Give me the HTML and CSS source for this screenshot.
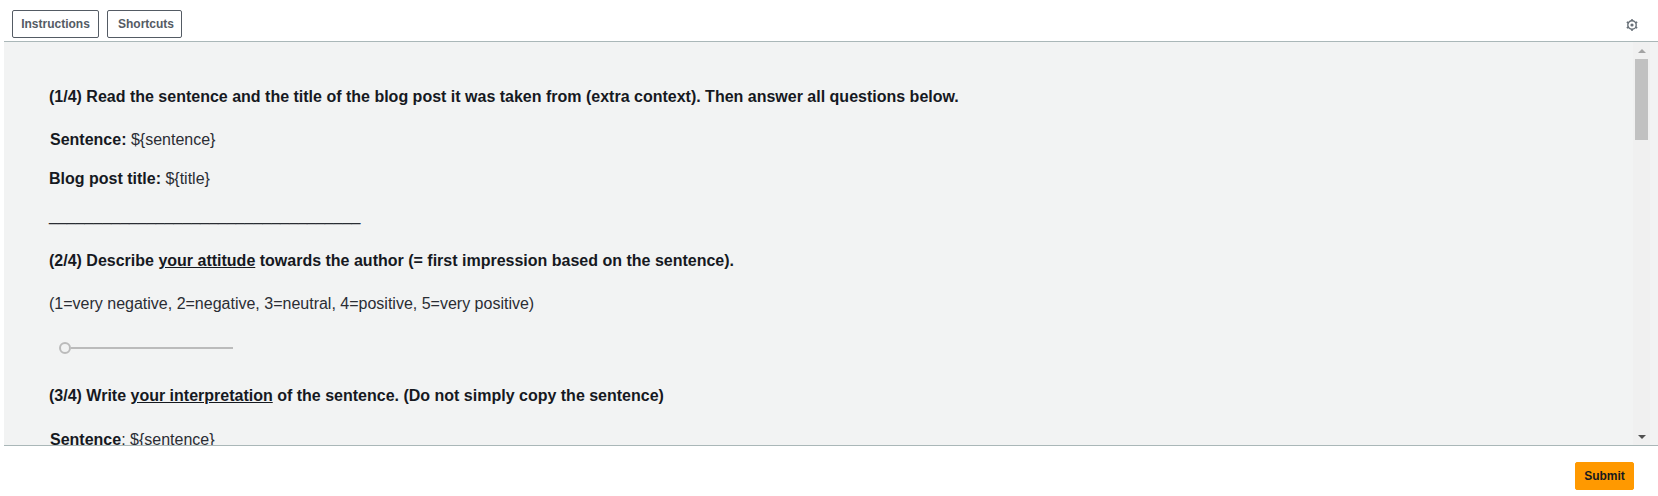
FILE: index.html
```html
<!DOCTYPE html>
<html lang="en">
<head>
<meta charset="utf-8">
<title>Task</title>
<link rel="stylesheet" href="styles.css">
</head>
<body>
<div class="app">
  <header class="topbar">
    <div class="tabs">
      <button class="tab tab-first">Instructions</button>
      <button class="tab tab-second">Shortcuts</button>
    </div>
    <svg class="gear" width="12" height="12" viewBox="0 0 12 12" aria-hidden="true">
      <circle cx="6" cy="6" r="4.2" fill="none" stroke="#687078" stroke-width="1.4"/>
      <circle cx="6" cy="6" r="1.6" fill="#687078"/>
      <path d="M6 0v2M6 10v2M.8 3l1.7 1M9.5 8l1.7 1M.8 9l1.7-1M9.5 4l1.7-1" stroke="#687078" stroke-width="1.5" fill="none"/>
    </svg>
  </header>
  <main class="panel">
    <div class="content">
      <p class="q1"><b>(1/4) Read the sentence and the title of the blog post it was taken from (extra context). Then answer all questions below.</b></p>
      <p class="sent"><b>Sentence:</b> ${sentence}</p>
      <p class="blog"><b>Blog post title:</b> ${title}</p>
      <p class="rule">___________________________________</p>
      <p class="q2"><b>(2/4) Describe <u>your attitude</u> towards the author (= first impression based on the sentence).</b></p>
      <p class="scale">(1=very negative, 2=negative, 3=neutral, 4=positive, 5=very positive)</p>
      <div class="slider"><span class="knob"></span><span class="track"></span></div>
      <p class="q3"><b>(3/4) Write <u>your interpretation</u> of the sentence. (Do not simply copy the sentence)</b></p>
      <p class="sent2"><b>Sentence</b>: ${sentence}</p>
    </div>
    <div class="scrollbar">
      <span class="arrow-up"></span>
      <span class="thumb"></span>
      <span class="spacer"></span>
      <span class="arrow-down"></span>
    </div>
  </main>
  <footer class="bottombar">
    <button class="submit">Submit</button>
  </footer>
</div>
</body>
</html>
```

FILE: styles.css
```css
* { box-sizing: border-box; }
html, body { margin: 0; padding: 0; height: 100%; background: #fff; overflow: hidden; }
body { font-family: "Liberation Sans", Arial, sans-serif; color: #16191f; }
.app { width: 1658px; height: 496px; display: flex; flex-direction: column; padding-left: 4px; }
.topbar { height: 42px; flex: none; display: flex; align-items: flex-start; justify-content: space-between; border-bottom: 1px solid #aab7b8; padding: 10px 20px 0 8px; }
.tabs { display: flex; gap: 8px; }
.tab { height: 28px; padding: 0 8px; background: #fff; border: 1px solid #545b64; border-radius: 2px; font: bold 12px "Liberation Sans", Arial, sans-serif; color: #545b64; }
.tab-first { width: 87px; }
.tab-second { width: 75px; padding-left: 10px; }
.gear { margin-top: 9px; }
.panel { height: 404px; flex: none; display: flex; background: #f2f3f3; border-bottom: 1px solid #aab7b8; overflow: hidden; }
.content { flex: 1; min-width: 0; padding: 0 0 0 45px; font-size: 16px; line-height: 20px; color: #2a2d33; overflow: hidden; }
.content b { color: #16191f; }
.content p { margin: 0; }
.q1 { padding-top: 45px; }
.sent { margin-top: 23px !important; padding-left: 1px; }
.blog { margin-top: 19px !important; }
.rule { margin-top: 17px !important; }
.q2 { margin-top: 25px !important; }
.scale { margin-top: 23px !important; }
.slider { display: flex; align-items: center; margin: 28px 0 0 10px; height: 12px; }
.knob { width: 12px; height: 12px; border: 2px solid #bbb; border-radius: 50%; flex: none; }
.track { width: 162px; height: 2px; background: #bbb; }
.q3 { margin-top: 32px !important; }
.sent2 { margin-top: 24px !important; padding-left: 1px; }
.scrollbar { width: 17px; flex: none; margin-right: 8px; background: #f0f0f0; display: flex; flex-direction: column; align-items: center; padding: 7px 0 6px; }
.arrow-up { width: 0; height: 0; border: 4px solid transparent; border-top: 0; border-bottom: 4px solid #a3a3a3; flex: none; }
.thumb { width: 13px; height: 81px; background: #c1c1c1; margin-top: 6px; flex: none; }
.spacer { flex: 1; }
.arrow-down { width: 0; height: 0; border: 4px solid transparent; border-bottom: 0; border-top: 4px solid #505050; flex: none; }
.bottombar { flex: 1; display: flex; justify-content: flex-end; align-items: flex-start; padding: 16px 24px 0 0; }
.submit { width: 59px; height: 28px; border: 1px solid #ff9900; border-radius: 2px; background: #ff9900; font: bold 12px "Liberation Sans", Arial, sans-serif; color: #16191f; padding: 0; }
```
